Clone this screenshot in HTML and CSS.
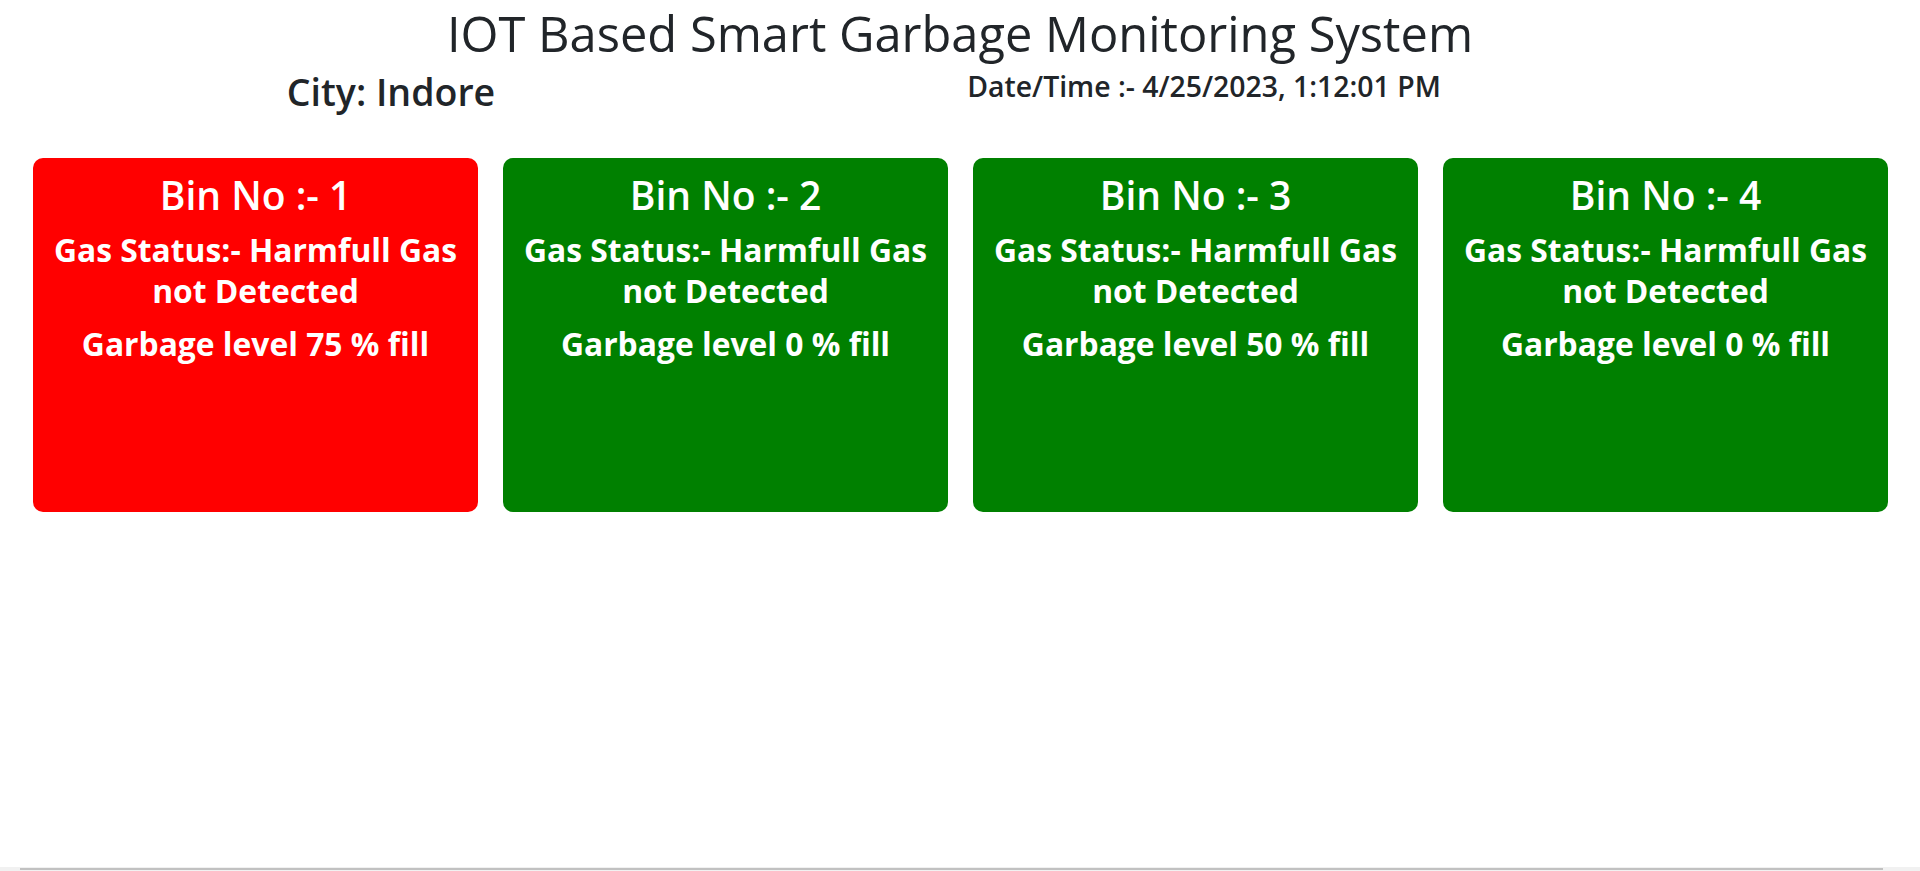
FILE: index.html
```html
<!DOCTYPE html>
<html lang="en">
<head>
<meta charset="utf-8">
<title>IOT Based Smart Garbage Monitoring System</title>
<link rel="stylesheet" href="styles.css">
</head>
<body>
  <header class="page-head">
    <h1 class="title">IOT Based Smart Garbage Monitoring System</h1>
    <div class="info-row">
      <h2 class="city">City: Indore</h2>
      <h4 class="datetime">Date/Time :- 4/25/2023, 1:12:01 PM</h4>
    </div>
  </header>

  <main class="bins">
    <section class="bin bin-full">
      <h2 class="bin-no">Bin No :- 1</h2>
      <h3 class="bin-gas">Gas Status:- Harmfull Gas not Detected</h3>
      <h3 class="bin-level">Garbage level 75 % fill</h3>
    </section>
    <section class="bin bin-ok">
      <h2 class="bin-no">Bin No :- 2</h2>
      <h3 class="bin-gas">Gas Status:- Harmfull Gas not Detected</h3>
      <h3 class="bin-level">Garbage level 0 % fill</h3>
    </section>
    <section class="bin bin-ok">
      <h2 class="bin-no">Bin No :- 3</h2>
      <h3 class="bin-gas">Gas Status:- Harmfull Gas not Detected</h3>
      <h3 class="bin-level">Garbage level 50 % fill</h3>
    </section>
    <section class="bin bin-ok">
      <h2 class="bin-no">Bin No :- 4</h2>
      <h3 class="bin-gas">Gas Status:- Harmfull Gas not Detected</h3>
      <h3 class="bin-level">Garbage level 0 % fill</h3>
    </section>
  </main>

  <div class="scroll-track"><div class="scroll-thumb"></div></div>
</body>
</html>
```

FILE: styles.css
```css
* {
  box-sizing: border-box;
}

html, body {
  margin: 0;
  padding: 0;
  background: #ffffff;
}

body {
  font-family: "Open Sans", "Noto Sans", sans-serif;
  color: #212529;
  overflow: hidden;
}

.page-head {
  display: flex;
  flex-direction: column;
}

.title {
  margin: 0;
  font-size: 48.8px;
  line-height: 66px;
  font-weight: 500;
  text-align: center;
}

.info-row {
  display: grid;
  grid-template-columns: 782px 844px;
  align-items: start;
  margin-top: 3px;
}

.city {
  margin: 0;
  font-size: 37.5px;
  line-height: 46px;
  font-weight: 600;
  text-align: center;
}

.datetime {
  margin: 0;
  font-size: 28.4px;
  line-height: 35px;
  font-weight: 600;
  text-align: center;
}

.bins {
  display: flex;
  gap: 25px;
  padding: 0 32px 0 33px;
  margin-top: 43px;
}

.bin {
  flex: 1 1 0;
  height: 354px;
  border-radius: 10px;
  padding: 14px 10px 0;
  color: #ffffff;
  text-align: center;
  display: flex;
  flex-direction: column;
}

.bin-full {
  background: #ff0000;
}

.bin-ok {
  background: #008000;
}

.bin-no {
  margin: 0;
  font-size: 39px;
  line-height: 45px;
  font-weight: 600;
}

.bin-gas {
  margin: 12px 0 0;
  font-size: 31.8px;
  line-height: 41px;
  font-weight: 700;
}

.bin-level {
  margin: 12px 0 0;
  font-size: 31.8px;
  line-height: 41px;
  font-weight: 700;
}

.scroll-track {
  position: fixed;
  left: 0;
  right: 0;
  bottom: 0;
  height: 4px;
  background: #f1f1f1;
  display: flex;
  align-items: flex-end;
  padding: 0 37px 1px 20px;
}

.scroll-thumb {
  flex: 1;
  height: 2px;
  background: #c1c1c1;
}
```
